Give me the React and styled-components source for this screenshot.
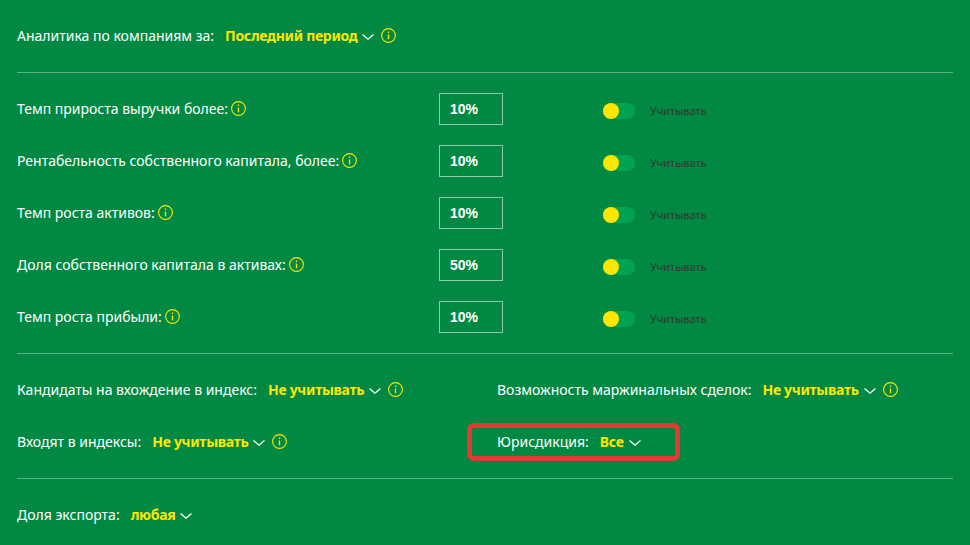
import styled, { createGlobalStyle } from "styled-components"

const GlobalStyle = createGlobalStyle`
  html, body {
    margin: 0;
    padding: 0;
    background: #018943;
  }
  body {
    font-family: "Noto Sans", "Open Sans", sans-serif;
  }
`

const metrics = [
  { label: "Темп прироста выручки более:", value: "10%" },
  { label: "Рентабельность собственного капитала, более:", value: "10%" },
  { label: "Темп роста активов:", value: "10%" },
  { label: "Доля собственного капитала в активах:", value: "50%" },
  { label: "Темп роста прибыли:", value: "10%" },
]

function InfoIcon() {
  return (
    <InfoSvg viewBox="0 0 15 15" fill="none" stroke="#ffe600">
      <circle cx="7.5" cy="7.5" r="6.9" strokeWidth="1.1" />
      <path d="M7.5 6.4v4.8M7.5 3.6v1.4" strokeWidth="1.3" />
    </InfoSvg>
  )
}

function Chevron() {
  return (
    <ChevronSvg viewBox="0 0 12 6" fill="none" stroke="#ffffff" strokeWidth="1.2">
      <path d="M0.5 0.5 6 5.2 11.5 0.5" />
    </ChevronSvg>
  )
}

function Filter({ label, value, info }) {
  return (
    <FilterWrap>
      <FilterLabel>{label}</FilterLabel>
      <FilterValue>{value}</FilterValue>
      <Chevron />
      {info && <InfoGap><InfoIcon /></InfoGap>}
    </FilterWrap>
  )
}

export default function App() {
  return (
    <Page>
      <GlobalStyle />
      <TopRow>
        <Filter label="Аналитика по компаниям за:" value="Последний период" info />
      </TopRow>
      <Divider />
      <Metrics>
        {metrics.map((m) => (
          <MetricRow key={m.label}>
            <MetricLabel>
              {m.label}
              <InfoIcon />
            </MetricLabel>
            <ValueBox>{m.value}</ValueBox>
            <Toggle><Knob /></Toggle>
            <ToggleText>Учитывать</ToggleText>
          </MetricRow>
        ))}
      </Metrics>
      <Divider />
      <FilterGrid>
        <Filter label="Кандидаты на вхождение в индекс:" value="Не учитывать" info />
        <Filter label="Возможность маржинальных сделок:" value="Не учитывать" info />
        <Filter label="Входят в индексы:" value="Не учитывать" info />
        <Highlighted>
          <Filter label="Юрисдикция:" value="Все" />
          <RedFrame />
        </Highlighted>
      </FilterGrid>
      <Divider />
      <BottomRow>
        <Filter label="Доля экспорта:" value="любая" />
      </BottomRow>
    </Page>
  )
}

const Page = styled.div`
  width: 970px;
  height: 545px;
  box-sizing: border-box;
  padding: 0 17px;
  overflow: hidden;
  background: #018943;
  color: #ffffff;
  font-size: 14px;
`
const Divider = styled.div`
  height: 1px;
  background: rgba(255, 255, 255, 0.35);
`
const TopRow = styled.div`
  height: 72px;
  box-sizing: border-box;
  padding-bottom: 2px;
  display: flex;
  align-items: center;
`
const Metrics = styled.div`
  display: flex;
  flex-direction: column;
  gap: 20px;
  padding: 20px 0 20px;
`
const MetricRow = styled.div`
  height: 32px;
  display: flex;
  align-items: center;
`
const MetricLabel = styled.div`
  width: 422px;
  box-sizing: border-box;
  padding-bottom: 2px;
  display: flex;
  align-items: center;
  gap: 3px;
  white-space: nowrap;
`
const ValueBox = styled.div`
  width: 64px;
  height: 32px;
  box-sizing: border-box;
  border: 1px solid rgba(255, 255, 255, 0.55);
  padding-left: 10px;
  display: flex;
  align-items: center;
  font-family: "Liberation Sans", sans-serif;
  font-weight: 700;
  font-size: 14px;
`
const Toggle = styled.div`
  width: 32px;
  height: 16px;
  margin: 4px 0 0 100px;
  border-radius: 8px;
  background: #00a450;
`
const Knob = styled.div`
  width: 16px;
  height: 16px;
  border-radius: 50%;
  background: #ffe600;
`
const ToggleText = styled.div`
  margin: 3px 0 0 15px;
  font-size: 11px;
  color: #2e3b33;
`
const FilterGrid = styled.div`
  display: grid;
  grid-template-columns: 480px 456px;
  grid-auto-rows: 52px;
  padding: 9px 0 0;
  height: 124px;
  box-sizing: border-box;
`
const BottomRow = styled.div`
  height: 72px;
  box-sizing: border-box;
  padding-bottom: 2px;
  display: flex;
  align-items: center;
`
const FilterWrap = styled.div`
  display: flex;
  align-items: center;
  white-space: nowrap;
  height: 52px;
`
const FilterLabel = styled.span``
const FilterValue = styled.span`
  margin-left: 11px;
  color: #ffe600;
  font-weight: 700;
  letter-spacing: -0.3px;
`
const InfoGap = styled.span`
  display: inline-flex;
  margin-left: 7px;
`
const InfoSvg = styled.svg`
  width: 15px;
  height: 15px;
  flex: none;
`
const ChevronSvg = styled.svg`
  width: 12px;
  height: 6px;
  margin-left: 5px;
  margin-top: 4px;
  flex: none;
`
const Highlighted = styled.div`
  position: relative;
`
const RedFrame = styled.div`
  position: absolute;
  left: -30px;
  top: 8px;
  width: 213px;
  height: 38px;
  box-sizing: border-box;
  border: 5px solid #e53935;
  border-radius: 7px;
`
